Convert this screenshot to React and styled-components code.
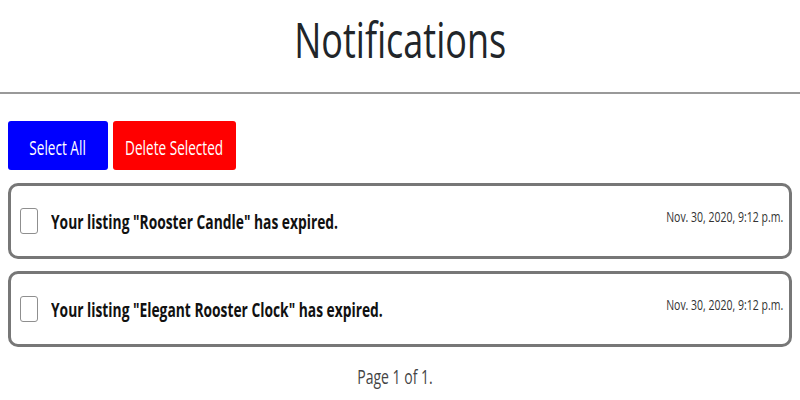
import React, { useState } from "react";
import styled, { createGlobalStyle } from "styled-components";

const GlobalStyle = createGlobalStyle`
  body {
    margin: 0;
    background: #fff;
    font-family: "Open Sans", "Noto Sans", sans-serif;
    overflow: hidden;
  }
`;

const Page = styled.div`
  width: 800px;
  display: flex;
  flex-direction: column;
`;

const Header = styled.header`
  height: 92px;
  display: flex;
  align-items: center;
  justify-content: center;
  border-bottom: 2px solid #999;
`;

const Title = styled.h1`
  margin: 0 0 14px;
  font-size: 50px;
  font-weight: 400;
  color: #212529;
  transform: scaleX(0.72);
`;

const Content = styled.main`
  padding: 27px 8px 0;
  display: flex;
  flex-direction: column;
`;

const Toolbar = styled.div`
  display: flex;
  gap: 5px;
  margin-bottom: 13px;
`;

const Button = styled.button`
  height: 49px;
  width: ${(p) => p.$width}px;
  padding: 3px 0 0;
  border: none;
  border-radius: 3px;
  background: ${(p) => p.$color};
  color: #fff;
  font-family: inherit;
  font-size: 20px;
  cursor: pointer;
  display: flex;
  align-items: center;
  justify-content: center;
`;

const ButtonLabel = styled.span`
  display: inline-block;
  white-space: nowrap;
  transform: scaleX(0.68);
`;

const List = styled.ul`
  list-style: none;
  margin: 0;
  padding: 0;
  display: flex;
  flex-direction: column;
  gap: 12px;
`;

const Card = styled.li`
  height: 76px;
  box-sizing: border-box;
  border: 3px solid #777;
  border-radius: 10px;
  padding: 0 6px 0 9px;
  display: flex;
  align-items: center;
`;

const Check = styled.input`
  appearance: none;
  margin: 0 13px 0 0;
  width: 18px;
  height: 26px;
  flex-shrink: 0;
  border: 1px solid #8f8f8f;
  border-radius: 3px;
  background: #fff;
  &:checked {
    background: #0075ff;
    border-color: #0075ff;
  }
`;

const Message = styled.span`
  flex: 1;
  font-size: 20px;
  font-weight: 700;
  color: #111;
  white-space: nowrap;
  transform: scaleX(0.69);
  transform-origin: left center;
`;

const Timestamp = styled.span`
  font-size: 15px;
  color: #333;
  white-space: nowrap;
  margin-bottom: 10px;
  transform: scaleX(0.7);
  transform-origin: right center;
`;

const Pager = styled.p`
  margin: 16px 10px 0 0;
  text-align: center;
  font-size: 20px;
  color: #444;
  transform: scaleX(0.7);
`;

const notifications = [
  { id: 1, text: 'Your listing "Rooster Candle" has expired.', date: "Nov. 30, 2020, 9:12 p.m." },
  { id: 2, text: 'Your listing "Elegant Rooster Clock" has expired.', date: "Nov. 30, 2020, 9:12 p.m." },
];

export default function App() {
  const [checked, setChecked] = useState([]);

  const toggle = (id) =>
    setChecked((c) => (c.includes(id) ? c.filter((x) => x !== id) : [...c, id]));

  return (
    <Page>
      <GlobalStyle />
      <Header>
        <Title>Notifications</Title>
      </Header>
      <Content>
        <Toolbar>
          <Button $color="#0000ff" $width={100} onClick={() => setChecked(notifications.map((n) => n.id))}>
            <ButtonLabel>Select All</ButtonLabel>
          </Button>
          <Button $color="#ff0000" $width={123}>
            <ButtonLabel>Delete Selected</ButtonLabel>
          </Button>
        </Toolbar>
        <List>
          {notifications.map((n) => (
            <Card key={n.id}>
              <Check type="checkbox" checked={checked.includes(n.id)} onChange={() => toggle(n.id)} />
              <Message>{n.text}</Message>
              <Timestamp>{n.date}</Timestamp>
            </Card>
          ))}
        </List>
        <Pager>Page 1 of 1.</Pager>
      </Content>
    </Page>
  );
}
